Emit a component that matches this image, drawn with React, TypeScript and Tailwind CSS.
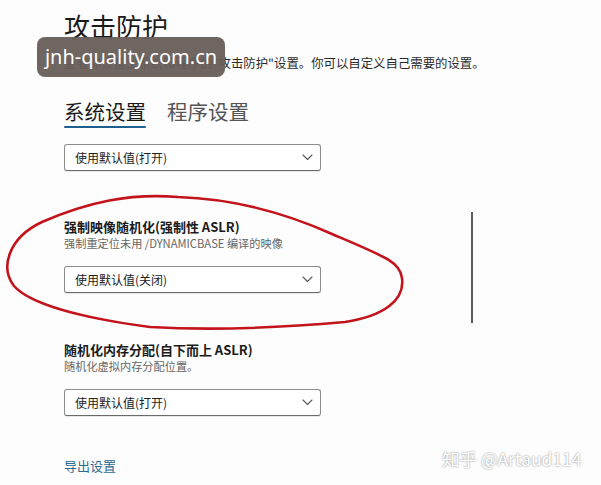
const Chevron = () => (
  <svg width="11" height="7" viewBox="0 0 11 7" fill="none" className="text-[#5a5a5a]">
    <path d="M1 1l4.5 4.5L10 1" stroke="currentColor" strokeWidth="1.1" strokeLinecap="round" strokeLinejoin="round" />
  </svg>
);

const Select = ({ value }: { value: string }) => (
  <div className="flex h-[27px] w-[257px] items-center justify-between rounded-[3px] border border-[#8c8c8c] border-b-[#6a6a6a] bg-white pl-[10px] pr-[7px] shadow-[0_1px_0_rgba(0,0,0,0.08)]">
    <span className="text-[12px] leading-none text-[#222]">{value}</span>
    <Chevron />
  </div>
);

const Setting = ({ title, desc }: { title: string; desc: string }) => (
  <div>
    <div className="text-[13px] font-semibold leading-[16px] text-[#1b1b1b]">{title}</div>
    <div className="text-[11.2px] leading-[16px] text-[#666]">{desc}</div>
  </div>
);

export default function App() {
  return (
    <div className="relative h-[485px] w-[601px] overflow-hidden bg-[#fdfdfd] font-['Noto_Sans_CJK_SC','Noto_Sans',sans-serif]">
      <div className="pl-[64px] pt-[10px]">
        <h1 className="text-[26px] font-normal leading-[32px] text-[#1a1a1a]">攻击防护</h1>
        <p className="mt-[12px] text-[12.4px] leading-[18px] text-[#2a2a2a]">
          查看你设备上系统和程序的"攻击防护"设置。你可以自定义自己需要的设置。
        </p>

        <div className="mt-[25px] flex gap-[21px]">
          <div className="flex flex-col">
            <span className="text-[20.5px] leading-[28px] text-[#1a1a1a]">系统设置</span>
            <div className="mt-[1px] h-[2px] rounded-full bg-[#1d5f8e]" />
          </div>
          <span className="text-[20.5px] leading-[28px] text-[#555]">程序设置</span>
        </div>

        <div className="mt-[16px]">
          <Select value="使用默认值(打开)" />
        </div>

        <div className="mt-[48px]">
          <Setting title="强制映像随机化(强制性 ASLR)" desc="强制重定位未用 /DYNAMICBASE 编译的映像" />
        </div>
        <div className="mt-[15px]">
          <Select value="使用默认值(关闭)" />
        </div>

        <div className="mt-[49px]">
          <Setting title="随机化内存分配(自下而上 ASLR)" desc="随机化虚拟内存分配位置。" />
        </div>
        <div className="mt-[15px]">
          <Select value="使用默认值(打开)" />
        </div>

        <a className="mt-[41px] block text-[13px] leading-[18px] text-[#2c6a92]">导出设置</a>
      </div>

      {/* scrollbar thumb */}
      <div className="absolute left-[471px] top-[212px] h-[111px] w-[2px] bg-[#5c5c5c]" />

      {/* hand-drawn red annotation */}
      <svg className="absolute left-0 top-0" width="601" height="485" viewBox="0 0 601 485" fill="none">
        <path
          d="M178 197 C130 193 88 202 42 222 C8 238 0 268 14 286 C30 304 82 318 150 327 C220 331 300 326 345 322 C384 316 405 300 402 278 C400 262 386 257 332 234 C292 216 240 199 178 197"
          stroke="#c3141c"
          strokeWidth="2.6"
          strokeLinecap="round"
        />
      </svg>

      {/* site watermark */}
      <div className="absolute left-[37px] top-[37px] flex h-[40px] w-[188px] items-center justify-center rounded-[8px] bg-[#675e5a]/95">
        <span className="font-['Noto_Sans',sans-serif] text-[20px] leading-none text-white">jnh-quality.com.cn</span>
      </div>

      <div className="absolute left-[442px] top-[448px] text-[17.5px] leading-[22px] text-white [text-shadow:0_0_2px_rgba(0,0,0,0.5)]">
        知乎 @Artaud114
      </div>
    </div>
  );
}
